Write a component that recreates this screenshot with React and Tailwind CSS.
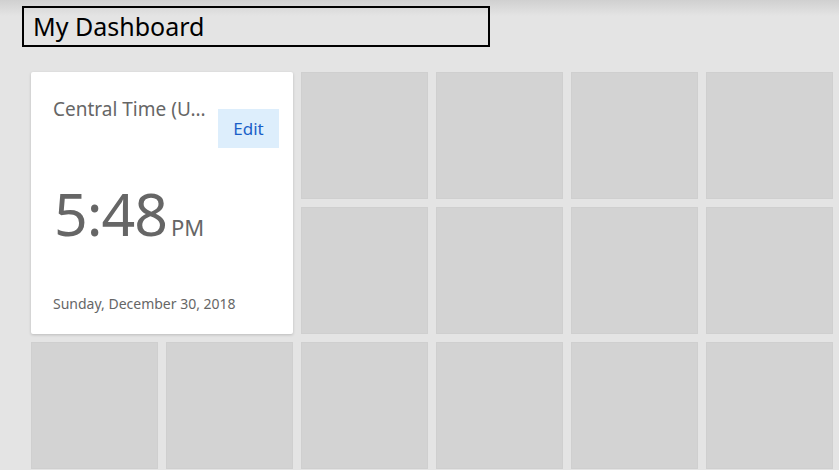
import React from 'react';

const ClockTile = () => {
    return (
        <div className='col-span-2 row-span-2 bg-white rounded-[2px] shadow-[0_1px_3px_rgba(0,0,0,0.18)] pl-[22px] pr-[14px] pt-[24px] flex flex-col'>
            <div className='flex items-start justify-between'>
                <span className='text-[19px] leading-[24px] text-[#666] mt-[1px]'>Central Time (U...</span>
                <button className='w-[61px] h-[39px] mt-[13px] bg-[#ddeefc] text-[#1a5fc8] text-[17px] flex items-center justify-center'>
                    Edit
                </button>
            </div>
            <div className='flex items-baseline mt-[30px] text-[#666]'>
                <span className='text-[59px] leading-[70px] tracking-[-1px] ml-[1px]'>5:48</span>
                <span className='text-[22px] ml-[4px]'>PM</span>
            </div>
            <div className='mt-auto mb-[20px] text-[14px] text-[#666]'>Sunday, December 30, 2018</div>
        </div>
    );
};

const App = () => {

    const emptyTiles = Array.from({ length: 14 });

    return (
        <div
            className='w-[839px] h-[470px] overflow-hidden bg-[linear-gradient(to_bottom,#d0d0d0,#e4e4e4_16px)]'
            style={{ fontFamily: '"Noto Sans", "Open Sans", sans-serif' }}
        >
            <div className='ml-[22px] mt-[6px] w-[468px] h-[41px] border-2 border-black flex items-center pl-[9px]'>
                <h1 className='text-[25px] text-black leading-none'>My Dashboard</h1>
            </div>

            <div className='ml-[31px] mt-[25px] grid grid-cols-[repeat(6,127px)] auto-rows-[127px] gap-[8px]'>
                <ClockTile />
                {emptyTiles.map((_, i) => (
                    <div key={i} className='bg-[#d3d3d3] border border-[#cfcfcf]'></div>
                ))}
            </div>
        </div>
    );
};

export default App;
